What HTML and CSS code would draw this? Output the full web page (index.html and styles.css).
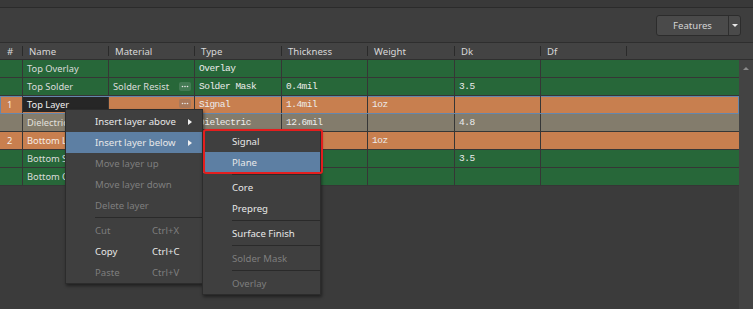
FILE: index.html
```html
<!DOCTYPE html>
<html>
<head>
    <title>Layer Stack</title>
    <link rel="stylesheet" href="styles.css">
</head>
<body>
    <div class="top-strip"></div>
    <div class="toolbar">
        <div class="split-btn">
            <span class="btn-label">Features</span>
            <span class="btn-drop"><span class="tri-down"></span></span>
        </div>
    </div>

    <div class="grid-head">
        <div class="hcell">#</div>
        <div class="hcell">Name</div>
        <div class="hcell">Material</div>
        <div class="hcell">Type</div>
        <div class="hcell">Thickness</div>
        <div class="hcell">Weight</div>
        <div class="hcell">Dk</div>
        <div class="hcell">Df</div>
        <div class="hcell last"></div>
    </div>

    <div class="grid-body">
        <div class="rows">
            <div class="row green">
                <div class="cell"></div>
                <div class="cell">Top Overlay</div>
                <div class="cell"></div>
                <div class="cell mono">Overlay</div>
                <div class="cell mono"></div>
                <div class="cell mono"></div>
                <div class="cell mono"></div>
                <div class="cell"></div>
            </div>
            <div class="row green">
                <div class="cell"></div>
                <div class="cell">Top Solder</div>
                <div class="cell">Solder Resist
                    <span class="dots"><svg width="12" height="9" viewBox="0 0 12 9"><circle cx="3.5" cy="4.5" r="0.8"/><circle cx="6" cy="4.5" r="0.8"/><circle cx="8.5" cy="4.5" r="0.8"/></svg></span>
                </div>
                <div class="cell mono">Solder Mask</div>
                <div class="cell mono">0.4mil</div>
                <div class="cell mono"></div>
                <div class="cell mono">3.5</div>
                <div class="cell"></div>
            </div>
            <div class="row orange selected">
                <div class="cell">1</div>
                <div class="cell editing">Top Layer</div>
                <div class="cell">
                    <span class="dots"><svg width="12" height="9" viewBox="0 0 12 9"><circle cx="3.5" cy="4.5" r="0.8"/><circle cx="6" cy="4.5" r="0.8"/><circle cx="8.5" cy="4.5" r="0.8"/></svg></span>
                </div>
                <div class="cell mono">Signal</div>
                <div class="cell mono">1.4mil</div>
                <div class="cell mono">1oz</div>
                <div class="cell mono"></div>
                <div class="cell"></div>
            </div>
            <div class="row tan">
                <div class="cell"></div>
                <div class="cell">Dielectric</div>
                <div class="cell"></div>
                <div class="cell mono">Dielectric</div>
                <div class="cell mono">12.6mil</div>
                <div class="cell mono"></div>
                <div class="cell mono">4.8</div>
                <div class="cell"></div>
            </div>
            <div class="row orange">
                <div class="cell">2</div>
                <div class="cell">Bottom Layer</div>
                <div class="cell"></div>
                <div class="cell mono"></div>
                <div class="cell mono"></div>
                <div class="cell mono">1oz</div>
                <div class="cell mono"></div>
                <div class="cell"></div>
            </div>
            <div class="row green">
                <div class="cell"></div>
                <div class="cell">Bottom Solder</div>
                <div class="cell"></div>
                <div class="cell mono"></div>
                <div class="cell mono"></div>
                <div class="cell mono"></div>
                <div class="cell mono">3.5</div>
                <div class="cell"></div>
            </div>
            <div class="row green">
                <div class="cell"></div>
                <div class="cell">Bottom Overlay</div>
                <div class="cell"></div>
                <div class="cell mono"></div>
                <div class="cell mono"></div>
                <div class="cell mono"></div>
                <div class="cell mono"></div>
                <div class="cell"></div>
            </div>
        </div>
        <div class="scrollbar"><span class="tri-up"></span></div>
    </div>

    <!-- context menu -->
    <div class="menu ctx">
        <div class="item">Insert layer above<span class="tri-right"></span></div>
        <div class="item active">Insert layer below<span class="tri-right"></span></div>
        <div class="item off">Move layer up</div>
        <div class="item off">Move layer down</div>
        <div class="item off">Delete layer</div>
        <div class="sep"></div>
        <div class="item off"><span class="label">Cut</span><span class="key">Ctrl+X</span></div>
        <div class="item"><span class="label">Copy</span><span class="key">Ctrl+C</span></div>
        <div class="item off"><span class="label">Paste</span><span class="key">Ctrl+V</span></div>
    </div>

    <div class="menu sub">
        <div class="item">Signal</div>
        <div class="item active">Plane</div>
        <div class="sep"></div>
        <div class="item">Core</div>
        <div class="item">Prepreg</div>
        <div class="sep"></div>
        <div class="item">Surface Finish</div>
        <div class="sep"></div>
        <div class="item off">Solder Mask</div>
        <div class="sep"></div>
        <div class="item off">Overlay</div>
        <div class="mark"></div>
    </div>
</body>
</html>
```

FILE: styles.css
```css
body {
    margin: 0;
    width: 753px;
    height: 309px;
    overflow: hidden;
    position: relative;
    background-color: #3b3b3b;
    color: #dcdcdc;
    font-family: "Noto Sans", sans-serif;
    font-size: 9.3px;
}

.top-strip {
    height: 7px;
    background-color: #393939;
    border-bottom: 1px solid #2b2b2b;
}

.toolbar {
    height: 34px;
    background-color: #3e3e3e;
    border-bottom: 1px solid #2e2e2e;
    display: flex;
    justify-content: flex-end;
    align-items: center;
    padding-right: 12px;
}

.split-btn {
    display: flex;
    height: 19px;
    width: 83px;
    border: 1px solid #2c2c2c;
    border-radius: 3px;
    background-color: #4a4a4a;
}

.btn-label {
    flex: 1;
    display: flex;
    align-items: center;
    justify-content: center;
    color: #d4d4d4;
    font-size: 9.6px;
    border-right: 1px solid #2e2e2e;
}

.btn-drop {
    width: 11px;
    display: flex;
    align-items: center;
    justify-content: center;
}

.tri-down {
    border-left: 3px solid transparent;
    border-right: 3px solid transparent;
    border-top: 3px solid #e8e8e8;
}

.grid-head {
    display: grid;
    grid-template-columns: 23px 86px 86px 87px 86px 87px 86px 86px 1fr;
    height: 16px;
    background-color: #434343;
    border-bottom: 1px solid #2f2f2f;
}

.hcell {
    display: flex;
    align-items: center;
    padding-left: 6px;
    position: relative;
    color: #d8d8d8;
    font-size: 9.6px;
}

.hcell:first-child {
    padding-left: 7px;
}

.hcell::after {
    content: "";
    position: absolute;
    right: 0;
    top: 3px;
    bottom: 3px;
    width: 1px;
    background-color: #2a2a2a;
}

.hcell.last::after {
    display: none;
}

.grid-body {
    display: flex;
    height: 249px;
}

.rows {
    width: 739px;
}

.scrollbar {
    flex: 1;
    background-color: #434343;
    display: flex;
    justify-content: center;
    padding-top: 7px;
}

.tri-up {
    width: 0;
    height: 0;
    border-left: 3px solid transparent;
    border-right: 3px solid transparent;
    border-bottom: 3px solid #8a8a8a;
}

.row {
    display: grid;
    grid-template-columns: 23px 86px 86px 87px 86px 87px 86px 1fr;
    height: 17px;
    border-bottom: 1px solid #363636;
    position: relative;
}

.row.green {
    background-color: #276739;
}

.row.orange {
    background-color: #c87f4f;
    color: #f5ece6;
}

.row.tan {
    background-color: #837c6c;
    color: #e2e0dc;
}

.row.selected {
    outline: 1px solid #6487ad;
    outline-offset: -1px;
}

.cell {
    display: flex;
    align-items: center;
    padding-left: 4px;
    border-right: 1px solid #363636;
    white-space: nowrap;
    overflow: hidden;
    position: relative;
}

.cell:first-child {
    padding-left: 7px;
}

.cell:last-child {
    border-right: none;
}

.cell.mono {
    font-family: "Liberation Mono", monospace;
    font-size: 9.5px;
    letter-spacing: -0.5px;
    color: #ececec;
}

.cell.editing {
    background-color: #262626;
    color: #f0f0f0;
    margin: 1px 0;
}

.dots {
    position: absolute;
    right: 3px;
    top: 4px;
    width: 12px;
    height: 9px;
    border-radius: 2px;
    background-color: #437a54;
    fill: #e6e6e6;
    display: flex;
}

.orange .dots {
    background-color: #a9795b;
    top: 3px;
}

.menu {
    position: absolute;
    background-color: #3f3f3f;
    border: 1px solid #2c2c2c;
    box-shadow: 1px 2px 3px rgba(0, 0, 0, 0.45);
}

.ctx {
    left: 65px;
    top: 109px;
    width: 136px;
    padding: 1px 0 0;
}

.sub {
    left: 202px;
    top: 129px;
    width: 117px;
    padding: 1px 0 0;
}

.item {
    height: 21px;
    display: flex;
    align-items: center;
    padding-left: 29px;
    color: #e8e8e8;
    font-size: 9.6px;
    position: relative;
}

.item.active {
    background-color: #5d7fa3;
}

.item.off {
    color: #7e7e7e;
}

.label {
    width: 57px;
}

.tri-right {
    position: absolute;
    right: 10px;
    top: 8px;
    border-top: 3px solid transparent;
    border-bottom: 3px solid transparent;
    border-left: 4px solid #f0f0f0;
}

.sep {
    height: 4px;
    margin-left: 29px;
    position: relative;
}

.sep::before {
    content: "";
    position: absolute;
    left: 0;
    right: 0;
    top: 1px;
    height: 1px;
    background-color: #2a2a2a;
}

.mark {
    position: absolute;
    left: 0;
    top: -1px;
    width: 116px;
    height: 41px;
    border: 2px solid #e31e1e;
    border-radius: 3px;
}
```
